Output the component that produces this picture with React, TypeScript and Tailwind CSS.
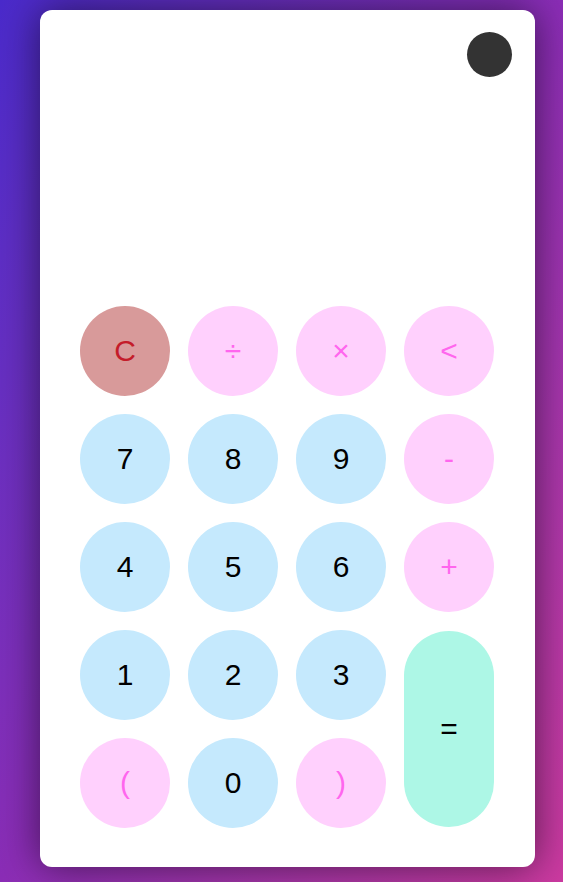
const keys: { label: string; kind: 'clear' | 'op' | 'num' | 'eq'; span?: boolean }[] = [
  { label: 'C', kind: 'clear' },
  { label: '÷', kind: 'op' },
  { label: '×', kind: 'op' },
  { label: '<', kind: 'op' },
  { label: '7', kind: 'num' },
  { label: '8', kind: 'num' },
  { label: '9', kind: 'num' },
  { label: '-', kind: 'op' },
  { label: '4', kind: 'num' },
  { label: '5', kind: 'num' },
  { label: '6', kind: 'num' },
  { label: '+', kind: 'op' },
  { label: '1', kind: 'num' },
  { label: '2', kind: 'num' },
  { label: '3', kind: 'num' },
  { label: '=', kind: 'eq', span: true },
  { label: '(', kind: 'op' },
  { label: '0', kind: 'num' },
  { label: ')', kind: 'op' },
]

const styles = {
  clear: 'bg-[#d89a9a] text-[#c41c2a]',
  op: 'bg-[#ffd0fd] text-[#ff66ee]',
  num: 'bg-[#c5e9fd] text-black',
  eq: 'bg-[#adf7e6] text-black',
}

export default function App() {
  return (
    <div className="min-h-screen bg-gradient-to-br from-[#4a2acb] via-[#8b2db6] to-[#cc3aa0] pt-[10px] pl-[40px] font-['Liberation_Sans',Arial,sans-serif]">
      <div className="w-[495px] h-[857px] bg-white rounded-[12px] shadow-[0_0_40px_rgba(0,0,0,0.55)] flex flex-col pl-[40px] pr-[41px] pb-[39px]">
        {/* Display / theme toggle */}
        <div className="flex-1 flex justify-end pt-[22px] -mr-[18px]">
          <button className="w-[45px] h-[45px] rounded-full bg-[#333333]" />
        </div>

        {/* Keypad */}
        <div className="grid grid-cols-[repeat(4,90px)] gap-[18px]">
          {keys.map(k => (
            <button
              key={k.label}
              className={`${styles[k.kind]} ${k.span ? 'row-span-2 h-[196px] rounded-[45px] self-center' : 'h-[90px] rounded-full'} w-[90px] flex items-center justify-center text-[30px] leading-none`}
            >
              {k.label}
            </button>
          ))}
        </div>
      </div>
    </div>
  )
}
